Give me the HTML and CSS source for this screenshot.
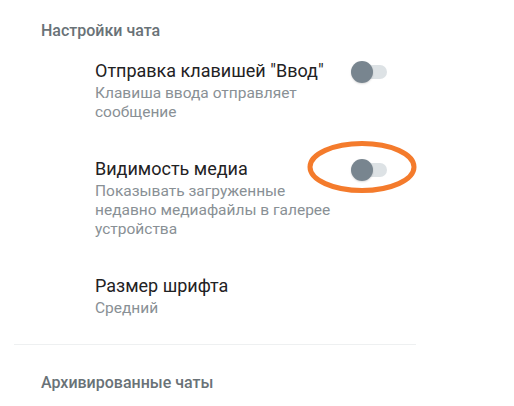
FILE: index.html
```html
<!DOCTYPE html>
<html lang="ru">
<head>
<meta charset="utf-8">
<link rel="stylesheet" href="styles.css">
</head>
<body>
<div class="settings">
  <div class="section-header">Настройки чата</div>
  <div class="item">
    <div class="texts">
      <div class="title">Отправка клавишей "Ввод"</div>
      <div class="subtitle">Клавиша ввода отправляет сообщение</div>
    </div>
    <div class="switch"><span class="track"></span><span class="knob"></span></div>
  </div>
  <div class="item">
    <div class="texts">
      <div class="title">Видимость медиа</div>
      <div class="subtitle">Показывать загруженные недавно медиафайлы в галерее устройства</div>
    </div>
    <div class="switch highlighted"><span class="track"></span><span class="knob"></span>
      <svg class="circle" width="112" height="54" viewBox="0 0 112 54"><ellipse cx="56" cy="27" rx="52" ry="23.5" fill="none" stroke="#f47b2c" stroke-width="5"/></svg>
    </div>
  </div>
  <div class="item">
    <div class="texts">
      <div class="title">Размер шрифта</div>
      <div class="subtitle">Средний</div>
    </div>
  </div>
  <div class="divider"></div>
  <div class="section-header second">Архивированные чаты</div>
</div>
</body>
</html>
```
FILE: styles.css
```css
html, body {
  margin: 0;
  padding: 0;
  background: #ffffff;
}
body {
  font-family: Roboto, "Noto Sans", sans-serif;
  width: 514px;
  height: 406px;
  overflow: hidden;
}
.settings {
  width: 416px;
  padding-top: 21px;
}
.section-header {
  padding-left: 41px;
  font-size: 16px;
  font-weight: 500;
  line-height: 20px;
  color: #697277;
}
.section-header.second {
  margin-top: 28px;
}
.item {
  display: flex;
  align-items: flex-start;
  padding: 17px 0 17px 95px;
}
.item:first-of-type {
  padding-top: 14px;
}
.texts {
  width: 252px;
}
.title {
  font-size: 18px;
  line-height: 26px;
  color: #1f2224;
}
.subtitle {
  font-size: 15.5px;
  line-height: 19px;
  color: #899095;
}
.switch {
  position: relative;
  width: 36px;
  height: 22px;
  margin-left: 4px;
  margin-top: 3px;
}
.track {
  position: absolute;
  left: 4px;
  top: 4px;
  width: 32px;
  height: 14px;
  border-radius: 7px;
  background: #dde2e5;
}
.knob {
  position: absolute;
  left: 0;
  top: 0;
  width: 22px;
  height: 22px;
  border-radius: 50%;
  background: #78858f;
  box-shadow: 0 1px 2px rgba(0,0,0,0.15);
}
.circle {
  position: absolute;
  left: -45px;
  top: -19px;
}
.divider {
  margin-left: 14px;
  height: 1px;
  background: #eef0f1;
  margin-top: 9px;
}
```
